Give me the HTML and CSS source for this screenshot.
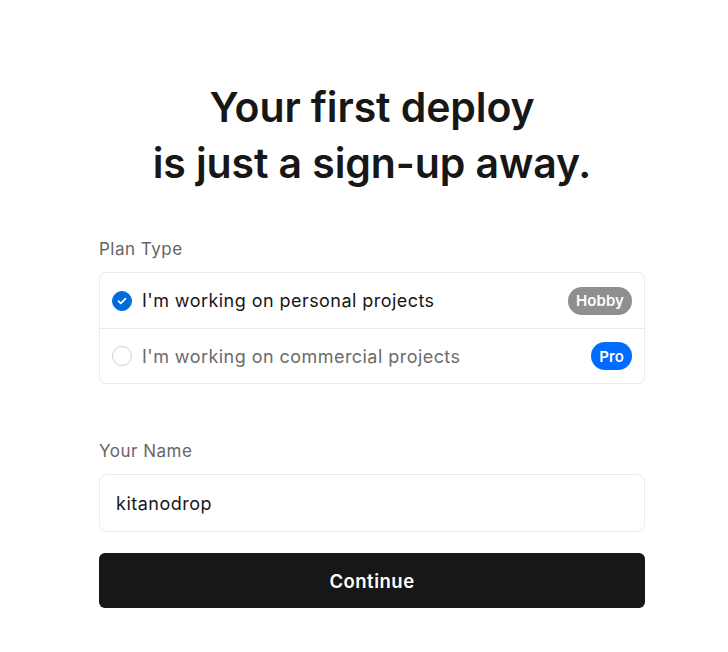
FILE: index.html
```html
<!DOCTYPE html>
<html lang="en">
<head>
    <meta charset="UTF-8">
    <meta name="viewport" content="width=device-width, initial-scale=1.0">
    <title>Sign up</title>
    <link rel="stylesheet" href="styles.css">
</head>
<body>
    <div class="page">
        <h1 class="title">Your first deploy<br>is just a sign-up away.</h1>

        <div class="form">
            <span class="label">Plan Type</span>
            <div class="plans">
                <label class="plan">
                    <span class="radio checked">
                        <svg width="12" height="12" viewBox="0 0 12 12"><path d="M2.5 6.2l2.3 2.2 4.7-4.8" fill="none" stroke="#fff" stroke-width="1.8" stroke-linecap="round" stroke-linejoin="round"/></svg>
                    </span>
                    <span class="plan-text">I'm working on personal projects</span>
                    <span class="badge hobby">Hobby</span>
                </label>
                <label class="plan">
                    <span class="radio"></span>
                    <span class="plan-text muted">I'm working on commercial projects</span>
                    <span class="badge pro">Pro</span>
                </label>
            </div>

            <span class="label name-label">Your Name</span>
            <input class="name" type="text" value="kitanodrop">

            <button class="continue">Continue</button>
        </div>
    </div>
</body>
</html>
```

FILE: styles.css
```css
* {
  box-sizing: border-box;
}

body {
  margin: 0;
  background: #fff;
  font-family: Inter, "Noto Sans", sans-serif;
  color: #171717;
}

.page {
  display: flex;
  flex-direction: column;
  align-items: center;
  padding-top: 79px;
  padding-left: 16px;
}

.title {
  margin: 0;
  text-align: center;
  font-size: 41px;
  line-height: 56px;
  font-weight: 600;
  letter-spacing: -0.1px;
  color: #171717;
}

.form {
  width: 546px;
  margin-top: 46px;
  display: flex;
  flex-direction: column;
}

.label {
  font-size: 17px;
  line-height: 24px;
  letter-spacing: 0.5px;
  color: #666;
  margin-bottom: 11px;
}

.plans {
  border: 1px solid #ebebeb;
  border-radius: 6px;
}

.plan {
  display: flex;
  align-items: center;
  height: 55px;
  padding: 0 12px;
  gap: 10px;
}

.plan + .plan {
  border-top: 1px solid #ebebeb;
}

.radio {
  width: 20px;
  height: 20px;
  border-radius: 50%;
  border: 1.5px solid #d0d0d0;
  display: flex;
  align-items: center;
  justify-content: center;
  flex-shrink: 0;
}

.radio.checked {
  background: #006bde;
  border-color: #006bde;
}

.plan-text {
  flex: 1;
  font-size: 18px;
  letter-spacing: 0.45px;
  color: #171717;
}

.plan-text.muted {
  color: #6b6b6b;
}

.badge {
  height: 28px;
  border-radius: 14px;
  padding: 0 8px;
  display: flex;
  align-items: center;
  font-size: 15px;
  font-weight: 600;
  letter-spacing: 0.1px;
  color: #fff;
}

.hobby {
  background: #8f8f8f;
}

.pro {
  background: #006bff;
}

.name-label {
  margin-top: 55px;
}

.name {
  height: 58px;
  border: 1px solid #ebebeb;
  border-radius: 8px;
  padding: 0 16px;
  font-family: Inter, "Noto Sans", sans-serif;
  font-size: 18px;
  letter-spacing: 0.5px;
  color: #171717;
  outline: none;
}

.continue {
  margin-top: 21px;
  height: 55px;
  border: none;
  border-radius: 6px;
  background: #171717;
  color: #fff;
  font-family: Inter, "Noto Sans", sans-serif;
  font-size: 18.5px;
  font-weight: 600;
  letter-spacing: 0.5px;
  cursor: pointer;
}
```
